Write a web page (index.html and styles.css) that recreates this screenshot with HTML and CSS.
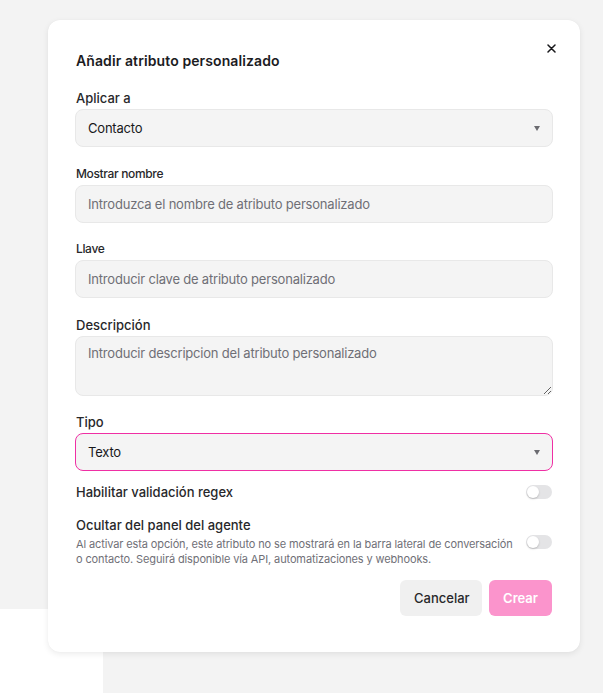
FILE: index.html
```html
<!DOCTYPE html>
<html lang="es">
<head>
<meta charset="utf-8">
<title>Añadir atributo personalizado</title>
<link rel="stylesheet" href="styles.css">
</head>
<body>
<div class="backdrop-piece"></div>
<div class="modal">
  <button class="close" aria-label="Cerrar">
    <svg width="9" height="9" viewBox="0 0 9 9"><path d="M1 1 L8 8 M8 1 L1 8" stroke="#18181b" stroke-width="1.5" stroke-linecap="round"/></svg>
  </button>
  <h2 class="title">Añadir atributo personalizado</h2>

  <div class="field">
    <label class="label">Aplicar a</label>
    <div class="control select"><span class="value">Contacto</span><span class="caret"></span></div>
  </div>

  <div class="field">
    <label class="label small">Mostrar nombre</label>
    <div class="control"><span class="placeholder">Introduzca el nombre de atributo personalizado</span></div>
  </div>

  <div class="field">
    <label class="label small">Llave</label>
    <div class="control"><span class="placeholder">Introducir clave de atributo personalizado</span></div>
  </div>

  <div class="field">
    <label class="label">Descripción</label>
    <textarea class="textarea" placeholder="Introducir descripcion del atributo personalizado"></textarea>
  </div>

  <div class="field last">
    <label class="label">Tipo</label>
    <div class="control select focused"><span class="value">Texto</span><span class="caret"></span></div>
  </div>

  <div class="toggle-row first">
    <span class="toggle-title">Habilitar validación regex</span>
    <span class="toggle"><span class="knob"></span></span>
  </div>

  <div class="toggle-row second">
    <div class="toggle-text">
      <div class="toggle-title">Ocultar del panel del agente</div>
      <div class="toggle-desc"><span class="nowrap">Al activar esta opción, este atributo no se mostrará en la barra lateral de conversación</span><br>o contacto. Seguirá disponible vía API, automatizaciones y webhooks.</div>
    </div>
    <span class="toggle"><span class="knob"></span></span>
  </div>

  <div class="actions">
    <button class="btn cancel">Cancelar</button>
    <button class="btn create">Crear</button>
  </div>
</div>
</body>
</html>
```

FILE: styles.css
```css
* { box-sizing: border-box; }
html, body { margin: 0; padding: 0; }
body {
  background: #f3f3f3;
  font-family: Inter, "Noto Sans", sans-serif;
  color: #18181b;
  width: 603px;
  height: 693px;
  overflow: hidden;
  position: relative;
  padding: 20px 0 0 48px;
}
.backdrop-piece {
  position: absolute;
  left: 0;
  top: 609px;
  width: 103px;
  height: 84px;
  background: #ffffff;
}
.modal {
  position: relative;
  z-index: 1;
  width: 532px;
  background: #ffffff;
  border-radius: 12px;
  box-shadow: 0 2px 6px rgba(0,0,0,0.08), 0 0 1px rgba(0,0,0,0.06);
  padding: 31px 27px 36px 27px;
}
.close {
  position: absolute;
  top: 21px;
  right: 22px;
  width: 14px;
  height: 14px;
  padding: 0;
  border: 0;
  background: transparent;
  display: flex;
  align-items: center;
  justify-content: center;
}
.title {
  margin: 0 0 18px 1px;
  font-size: 14px;
  line-height: 20px;
  font-weight: 600;
  letter-spacing: 0.1px;
  color: #1c1c1f;
}
.field { margin-bottom: 17.5px; }
.field.last { margin-bottom: 12px; }
.label {
  display: block;
  font-size: 13px;
  line-height: 18px;
  font-weight: 500;
  color: #27272a;
  margin: 0 0 2px 1px;
}
.label.small {
  font-size: 12px;
  letter-spacing: -0.35px;
}
.control {
  height: 38px;
  background: #f4f4f4;
  border: 1px solid #e8e8e8;
  border-radius: 8px;
  display: flex;
  align-items: center;
  padding: 0 12px;
  font-size: 13px;
  letter-spacing: -0.2px;
}
.value { color: #18181b; flex: 1; }
.placeholder { color: #6f6f76; }
.select.focused { border-color: #ef2fa4; }
.caret {
  width: 0;
  height: 0;
  border-left: 3.5px solid transparent;
  border-right: 3.5px solid transparent;
  border-top: 5px solid #6b6b70;
}
.textarea {
  display: block;
  width: 100%;
  height: 60px;
  resize: vertical;
  background: #f4f4f4;
  border: 1px solid #e8e8e8;
  border-radius: 8px;
  padding: 7px 12px;
  font-family: Inter, "Noto Sans", sans-serif;
  font-size: 13px;
  letter-spacing: -0.2px;
  line-height: 18px;
  color: #18181b;
  outline: none;
}
.textarea::placeholder { color: #6f6f76; opacity: 1; }
.toggle-row {
  display: flex;
  align-items: center;
  justify-content: space-between;
  gap: 6px;
}
.toggle-row.first { margin-bottom: 15px; }
.toggle-row.second { margin-bottom: 13px; }
.toggle-title {
  font-size: 13px;
  line-height: 18px;
  font-weight: 500;
  color: #27272a;
  padding-left: 1px;
}
.toggle-text { flex: 1; min-width: 0; }
.toggle-desc {
  margin-top: 3px;
  font-size: 11px;
  line-height: 15px;
  letter-spacing: -0.12px;
  color: #707077;
  padding-left: 1px;
}
.nowrap { white-space: nowrap; }
.toggle {
  flex: none;
  width: 26px;
  height: 14px;
  border-radius: 7px;
  background: #e4e4e6;
  position: relative;
  margin-right: 1px;
}
.knob {
  position: absolute;
  left: 1px;
  top: 1px;
  width: 12px;
  height: 12px;
  border-radius: 50%;
  background: #ffffff;
  box-shadow: 0 1px 2px rgba(0,0,0,0.2);
}
.actions {
  display: flex;
  justify-content: flex-end;
  gap: 7px;
  padding-right: 1px;
}
.btn {
  height: 36px;
  border: 0;
  border-radius: 6px;
  font-family: Inter, "Noto Sans", sans-serif;
  font-size: 13px;
  padding: 0 14px;
}
.cancel {
  width: 82px;
  background: #f0f0f0;
  color: #27272a;
  font-weight: 500;
}
.create {
  width: 63px;
  background: #fb94cc;
  color: #ffffff;
  font-weight: 600;
}
```
